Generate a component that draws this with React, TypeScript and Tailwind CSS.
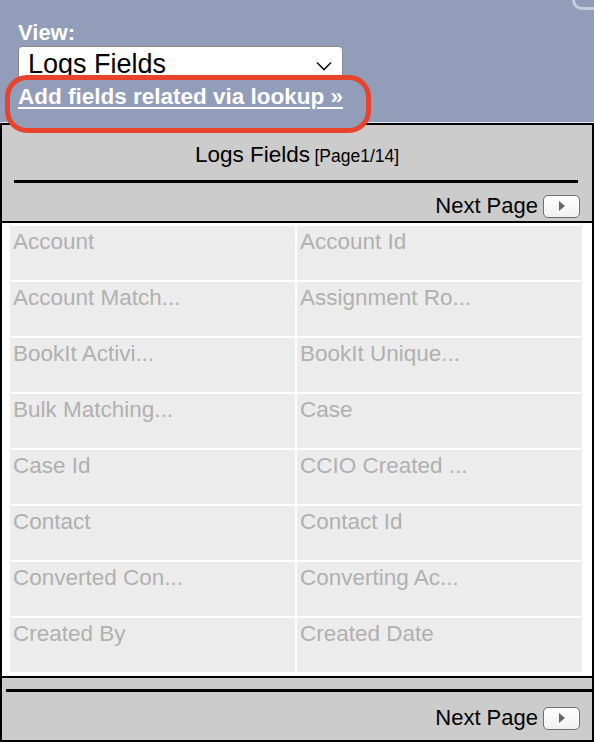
import React from "react";

const fields: [string, string][] = [
  ["Account", "Account Id"],
  ["Account Match...", "Assignment Ro..."],
  ["BookIt Activi...", "BookIt Unique..."],
  ["Bulk Matching...", "Case"],
  ["Case Id", "CCIO Created ..."],
  ["Contact", "Contact Id"],
  ["Converted Con...", "Converting Ac..."],
  ["Created By", "Created Date"],
];

function NextBtn() {
  return (
    <div className="w-[37px] h-[23px] rounded-[5px] border-[1.5px] border-[#707070] bg-gradient-to-b from-white to-[#f0f0f0] flex items-center justify-center">
      <svg width="10" height="12" viewBox="0 0 10 12">
        <polygon points="2,1 8,6 2,11" fill="#666" />
      </svg>
    </div>
  );
}

function NextRow() {
  return (
    <div className="h-[26px] flex items-center justify-end gap-[5px] pr-[12px]">
      <span className="text-[22px] leading-[24px] text-black">Next Page</span>
      <NextBtn />
    </div>
  );
}

export default function App() {
  return (
    <div className="w-[594px] h-[742px] bg-[#919db9] font-['Liberation_Sans',Arial,sans-serif] relative overflow-hidden">
      <div className="absolute right-[-20px] top-[-22px] w-[42px] h-[32px] rounded-[10px] border-[3px] border-[#c8cede] bg-[#8f9bb8]" />
      <div className="h-[122px] relative px-[18px] pt-[21px]">
        <div className="text-white font-bold text-[22px] leading-[24px]">View:</div>
        <div className="mt-[1px] w-[325px] h-[36px] bg-white border border-[#8a8a8a] rounded-[4px] flex items-start justify-between pl-[9px] pr-[10px] pt-[2px]">
          <span className="text-[27px] leading-[30px] text-black">Logs Fields</span>
          <svg width="16" height="10" viewBox="0 0 16 10" className="mt-[12px]">
            <polyline points="1,1.5 8,8.5 15,1.5" fill="none" stroke="#111" strokeWidth="1.6" />
          </svg>
        </div>
        <div className="absolute left-[5px] top-[75px] w-[366px] h-[58px] rounded-[22px] border-[5px] border-[#e8432c] bg-[#919db9] z-10 pl-[8px] pt-[5px]">
          <a className="text-white font-bold text-[22.5px] leading-[24px] underline decoration-2 underline-offset-[3px] cursor-pointer whitespace-nowrap">
            Add fields related via lookup »
          </a>
        </div>
      </div>
      <div className="border-t border-[#e3e7f0]">
        <div className="border-2 border-black bg-[#cccccc]">
          <div className="pt-[17px] text-center text-black leading-[26px]">
            <span className="text-[22.5px]">Logs Fields</span>{" "}
            <span className="text-[17.5px]">[Page1/14]</span>
          </div>
          <div className="mt-[10px] ml-[12px] mr-[14px] h-[3px] bg-black" />
          <div className="mt-[10px] mb-[2px]">
            <NextRow />
          </div>
          <div className="border-t-2 border-black bg-white pl-[8px] pr-[10px] pt-[3px] pb-[4px] grid grid-cols-2 gap-x-[2px] gap-y-[2px]">
            {fields.flatMap(([a, b]) => [a, b]).map((f, i) => (
              <div key={i} className="h-[54px] bg-[#ececec] pl-[3px] pt-[3px] text-[22.5px] leading-[26px] text-[#b0b0b0] whitespace-nowrap">
                {f}
              </div>
            ))}
          </div>
          <div className="border-t-2 border-black pt-[11px]">
            <div className="ml-[4px] h-[3px] bg-black" />
            <div className="mt-[13px] pb-[9px]">
              <NextRow />
            </div>
          </div>
        </div>
      </div>
    </div>
  );
}
